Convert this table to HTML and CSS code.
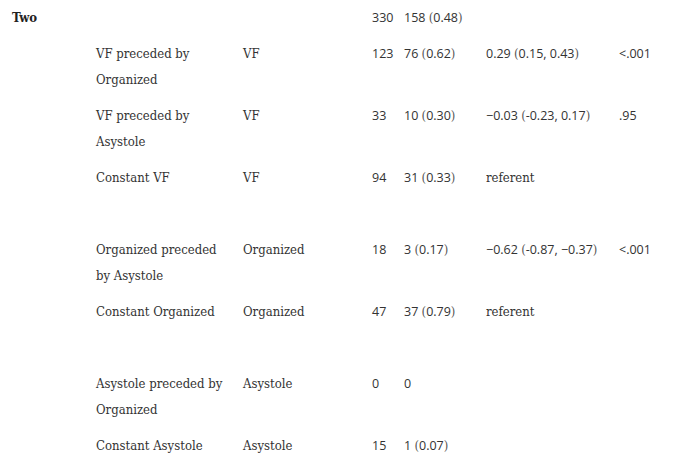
FILE: index.html
```html
<!DOCTYPE html>
<html>
<head>
<meta charset="utf-8">
<link rel="stylesheet" href="styles.css">
</head>
<body>
<table class="tbl">
  <colgroup>
    <col class="c1"><col class="c2"><col class="c3"><col class="c4"><col class="c5"><col class="c6"><col class="c7">
  </colgroup>
  <tbody>
    <tr class="first">
      <td class="grp">Two</td><td></td><td></td>
      <td class="num">330</td>
      <td class="num">158 <span class="par">(</span>0.48<span class="par">)</span></td>
      <td></td><td></td>
    </tr>
    <tr>
      <td></td><td>VF preceded by Organized</td><td>VF</td>
      <td class="num">123</td>
      <td class="num">76 <span class="par">(</span>0.62<span class="par">)</span></td>
      <td class="num">0.29 <span class="par">(</span>0.15, 0.43<span class="par">)</span></td>
      <td class="num">&lt;.001</td>
    </tr>
    <tr>
      <td></td><td>VF preceded by Asystole</td><td>VF</td>
      <td class="num">33</td>
      <td class="num">10 <span class="par">(</span>0.30<span class="par">)</span></td>
      <td class="num">−0.03 <span class="par">(</span>-0.23, 0.17<span class="par">)</span></td>
      <td class="num">.95</td>
    </tr>
    <tr>
      <td></td><td>Constant VF</td><td>VF</td>
      <td class="num">94</td>
      <td class="num">31 <span class="par">(</span>0.33<span class="par">)</span></td>
      <td>referent</td>
      <td></td>
    </tr>
    <tr class="blank"><td></td><td></td><td></td><td></td><td></td><td></td><td></td></tr>
    <tr>
      <td></td><td>Organized preceded by Asystole</td><td>Organized</td>
      <td class="num">18</td>
      <td class="num">3 <span class="par">(</span>0.17<span class="par">)</span></td>
      <td class="num">−0.62 <span class="par">(</span>-0.87, −0.37<span class="par">)</span></td>
      <td class="num">&lt;.001</td>
    </tr>
    <tr>
      <td></td><td>Constant Organized</td><td>Organized</td>
      <td class="num">47</td>
      <td class="num">37 <span class="par">(</span>0.79<span class="par">)</span></td>
      <td>referent</td>
      <td></td>
    </tr>
    <tr class="blank"><td></td><td></td><td></td><td></td><td></td><td></td><td></td></tr>
    <tr>
      <td></td><td>Asystole preceded by Organized</td><td>Asystole</td>
      <td class="num">0</td>
      <td class="num">0</td>
      <td></td><td></td>
    </tr>
    <tr>
      <td></td><td>Constant Asystole</td><td>Asystole</td>
      <td class="num">15</td>
      <td class="num">1 <span class="par">(</span>0.07<span class="par">)</span></td>
      <td></td><td></td>
    </tr>
  </tbody>
</table>
</body>
</html>
```
FILE: styles.css
```css
html, body {
  margin: 0;
  padding: 0;
  background: #ffffff;
}
body {
  font-family: "DejaVu Serif Condensed", "DejaVu Serif", serif;
  font-size: 13px;
  color: #333333;
}
.tbl {
  border-collapse: collapse;
  table-layout: fixed;
  width: 679px;
  margin-left: 12px;
}
.c1 { width: 84px; }
.c2 { width: 147px; }
.c3 { width: 129px; }
.c4 { width: 32px; }
.c5 { width: 82px; }
.c6 { width: 133px; }
.c7 { width: 72px; }
.tbl td {
  vertical-align: top;
  padding: 5px 14px 5px 0;
  line-height: 26px;
  text-align: left;
}
.tbl tr.blank td {
  padding: 0;
  height: 36px;
}
.grp {
  font-weight: bold;
  color: #222222;
}
.num {
  font-family: "Open Sans", "Liberation Sans", sans-serif;
  font-size: 12.5px;
  white-space: nowrap;
}
.par {
  font-family: "DejaVu Serif Condensed", "DejaVu Serif", serif;
  font-size: 13px;
  color: #555555;
}
```
